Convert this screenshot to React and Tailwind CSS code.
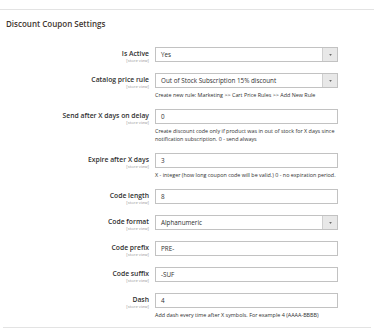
const rows = [
  { label: 'Is Active', value: 'Yes', select: true },
  { label: 'Catalog price rule', value: 'Out of Stock Subscription 15% discount', select: true, help: ['Create new rule: Marketing >> Cart Price Rules >> Add New Rule'] },
  {
    label: 'Send after X days on delay',
    value: '0',
    help: ['Create discount code only if product was in out of stock for X days since', 'notification subscription. 0 - send always'],
  },
  { label: 'Expire after X days', value: '3', help: ['X - integer (how long coupon code will be valid.) 0 - no expiration period.'] },
  { label: 'Code length', value: '8' },
  { label: 'Code format', value: 'Alphanumeric', select: true },
  { label: 'Code prefix', value: 'PRE-' },
  { label: 'Code suffix', value: '-SUF' },
  { label: 'Dash', value: '4', help: ['Add dash every time after X symbols. For example 4 (AAAA-BBBB)'] },
];

function Field({ value, select }) {
  return (
    <div className="flex h-[15px] border border-[#c2c2c2] bg-white">
      <div className="flex-1 pl-[5px] text-[6.3px] leading-[13px] text-[#303030]">{value}</div>
      {select && (
        <div className="flex w-[15px] items-center justify-center border-l border-[#cfcfcf] bg-[#e8e8e8]">
          <svg width="3" height="2" viewBox="0 0 4 3">
            <path d="M0 0h4L2 3z" fill="#6b6b6b" />
          </svg>
        </div>
      )}
    </div>
  );
}

export default function App() {
  return (
    <div className="h-[328px] w-[374px] bg-white pt-[9px] text-[#303030]" style={{ fontFamily: '"Open Sans", sans-serif' }}>
      <div className="border-t border-[#e3e3e3]">
        <h2 className="pl-[6px] pt-[9px] text-[8px] font-semibold leading-[10px] text-[#41362f]">Discount Coupon Settings</h2>
      </div>

      <div className="mt-[18px] flex flex-col gap-[10px]">
        {rows.map((r) => (
          <div key={r.label} className="flex">
            <div className="w-[149px] pt-[3px] text-right">
              <div className="text-[6.8px] font-semibold leading-[8px] text-[#303030]">{r.label}</div>
              <div className="text-[4.2px] leading-[5px] text-[#999]">[store view]</div>
            </div>
            <div className="ml-[6px] w-[183px]">
              <Field value={r.value} select={r.select} />
              {r.help && (
                <div className="mt-[3px] text-[5.4px] leading-[8px] text-[#303030]">
                  {r.help.map((h) => (
                    <div key={h}>{h}</div>
                  ))}
                </div>
              )}
            </div>
          </div>
        ))}
      </div>

      <div className="mx-[3px] mt-[8px] border-t border-[#e3e3e3]" />
    </div>
  );
}
